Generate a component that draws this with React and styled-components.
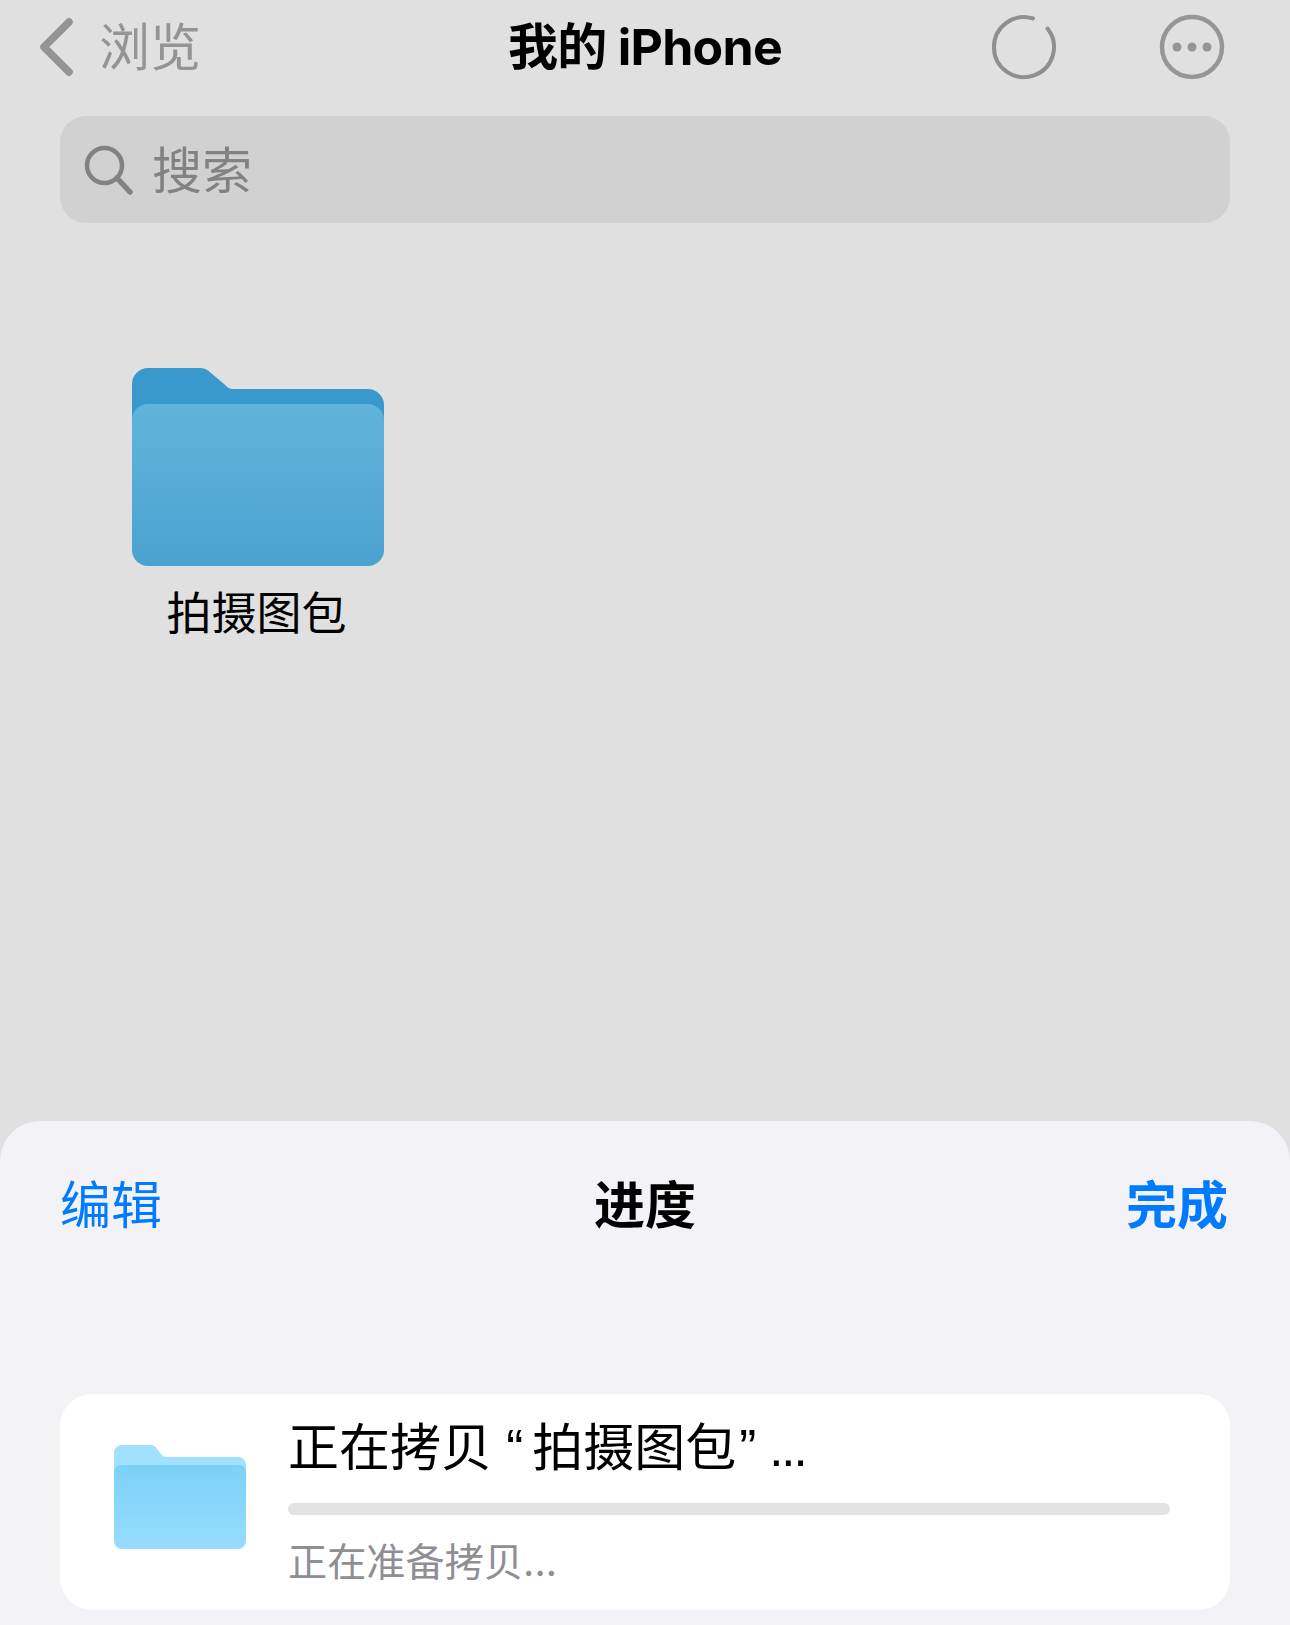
import React from 'react'
import styled, { createGlobalStyle } from 'styled-components'

const GlobalStyle = createGlobalStyle`
  html, body {
    margin: 0;
    padding: 0;
    background: #e0e0e0;
  }
  body {
    font-family: Inter, "Noto Sans CJK SC", sans-serif;
  }
`

const Page = styled.div`
  width: 1290px;
  height: 1625px;
  display: flex;
  flex-direction: column;
  overflow: hidden;
  background: #e0e0e0;
`

const TopBar = styled.header`
  height: 94px;
  display: grid;
  grid-template-columns: 1fr auto 1fr;
  align-items: center;
  padding: 0 40px;
`

const BackButton = styled.div`
  display: flex;
  align-items: center;
  gap: 25px;
  font-size: 51px;
  color: #949494;
`

const BackLabel = styled.span`
  padding-bottom: 7px;
`

const Title = styled.div`
  font-size: 50px;
  font-weight: 700;
  color: #000;
  letter-spacing: -0.7px;
  padding-bottom: 8px;
`

const TopActions = styled.div`
  display: flex;
  justify-content: flex-end;
  align-items: center;
  gap: 102px;
  padding-right: 25px;
`

const SearchBar = styled.div`
  height: 107px;
  margin: 22px 60px 0;
  padding-left: 24px;
  display: flex;
  align-items: center;
  gap: 18px;
  border-radius: 26px;
  background: #d1d1d1;
  font-size: 50px;
  color: #828282;
`

const SearchLabel = styled.span`
  padding-bottom: 5px;
`

const FolderGrid = styled.div`
  display: flex;
  padding: 145px 0 0 132px;
`

const FolderItem = styled.div`
  width: 252px;
  display: flex;
  flex-direction: column;
  align-items: center;
  gap: 18px;
`

const FolderName = styled.div`
  font-size: 45px;
  line-height: 60px;
  color: #000;
  padding-right: 3px;
`

const Sheet = styled.section`
  margin-top: auto;
  height: 504px;
  box-sizing: border-box;
  padding: 0 60px;
  border-radius: 40px 40px 0 0;
  background: #f2f2f7;
`

const SheetNav = styled.div`
  height: 168px;
  display: grid;
  grid-template-columns: 1fr auto 1fr;
  align-items: center;
  font-size: 51px;
  padding-bottom: 6px;
  box-sizing: border-box;
`

const NavLink = styled.div`
  color: #007aff;
  font-weight: ${(p) => (p.$bold ? 600 : 400)};
  text-align: ${(p) => (p.$right ? 'right' : 'left')};
  padding-right: ${(p) => (p.$right ? '2px' : '0')};
`

const SheetTitle = styled.div`
  font-weight: 700;
  color: #000;
`

const ProgressCard = styled.div`
  margin-top: 105px;
  height: 216px;
  box-sizing: border-box;
  padding: 0 60px 0 54px;
  display: flex;
  align-items: center;
  gap: 42px;
  border-radius: 32px;
  background: #fff;
`

const FolderSlot = styled.div`
  display: flex;
  margin-bottom: 10px;
`

const ProgressBody = styled.div`
  flex: 1;
  align-self: flex-start;
  display: flex;
  flex-direction: column;
  padding-top: 20px;
`

const ProgressTitle = styled.div`
  font-family: "Liberation Sans", "Noto Sans CJK SC", sans-serif;
  font-size: 51px;
  line-height: 70px;
  color: #000;
  white-space: pre;
`

const Quote = styled.span`
  margin-left: ${(p) => p.$before};
  margin-right: ${(p) => p.$after};
`

const Dots = styled.span`
  letter-spacing: -2px;
`

const ProgressTrack = styled.div`
  height: 12px;
  margin-top: 19px;
  border-radius: 6px;
  background: #e3e3e5;
`

const ProgressStatus = styled.div`
  margin-top: 20px;
  font-size: 39.2px;
  line-height: 54px;
  color: #8e8e93;
`

const BackChevron = () => (
  <svg width="34" height="58" viewBox="0 0 34 58" fill="none">
    <path d="M29 4 L4 29 L29 54" stroke="#949494" strokeWidth="7.5" strokeLinecap="round" strokeLinejoin="round" />
  </svg>
)

const Spinner = () => (
  <svg width="66" height="66" viewBox="0 0 66 66" fill="none">
    <path d="M42 4.5 A30 30 0 1 0 56.5 14.5" stroke="#8f8f8f" strokeWidth="4" strokeLinecap="round" />
  </svg>
)

const MoreButton = () => (
  <svg width="66" height="66" viewBox="0 0 66 66" fill="none">
    <circle cx="33" cy="33" r="30" stroke="#969696" strokeWidth="4.5" />
    <circle cx="18" cy="33" r="4.5" fill="#969696" />
    <circle cx="33" cy="33" r="4.5" fill="#969696" />
    <circle cx="48" cy="33" r="4.5" fill="#969696" />
  </svg>
)

const SearchIcon = () => (
  <svg width="50" height="50" viewBox="0 0 50 50" fill="none">
    <circle cx="20.5" cy="20.5" r="17.5" stroke="#828282" strokeWidth="4.5" />
    <path d="M33 33 L46 47" stroke="#828282" strokeWidth="5.5" strokeLinecap="round" />
  </svg>
)

const LargeFolder = () => (
  <svg width="252" height="198" viewBox="0 0 252 198">
    <defs>
      <linearGradient id="largeFront" x1="0" y1="0" x2="0" y2="1">
        <stop offset="0" stopColor="#60b3da" />
        <stop offset="0.35" stopColor="#5aaed8" />
        <stop offset="1" stopColor="#4aa2cf" />
      </linearGradient>
    </defs>
    <path
      d="M0 16 A16 16 0 0 1 16 0 H66 C72 0 75 1 79 5 L92 16 C95 19 97 21 102 21 H236 A16 16 0 0 1 252 37 V120 H0 Z"
      fill="#3a99cc"
    />
    <path
      d="M0 52 A16 16 0 0 1 16 36 H236 A16 16 0 0 1 252 52 V182 A16 16 0 0 1 236 198 H16 A16 16 0 0 1 0 182 Z"
      fill="url(#largeFront)"
    />
  </svg>
)

const SmallFolder = () => (
  <svg width="132" height="104" viewBox="0 0 132 104">
    <defs>
      <linearGradient id="smallFront" x1="0" y1="0" x2="0" y2="1">
        <stop offset="0" stopColor="#7bd1f8" />
        <stop offset="1" stopColor="#97dcfd" />
      </linearGradient>
    </defs>
    <path
      d="M0 8 A8 8 0 0 1 8 0 H36 C40 0 41 1 43 4 L48 10 C50 12 52 12 55 12 H124 A8 8 0 0 1 132 20 V60 H0 Z"
      fill="#a0e1ff"
    />
    <path
      d="M0 26 A8 8 0 0 1 8 20 H124 A8 8 0 0 1 132 26 V96 A8 8 0 0 1 124 104 H8 A8 8 0 0 1 0 96 Z"
      fill="url(#smallFront)"
    />
  </svg>
)

const App = () => {
  return (
    <Page>
      <GlobalStyle />
      <TopBar>
        <BackButton>
          <BackChevron />
          <BackLabel>浏览</BackLabel>
        </BackButton>
        <Title>我的 iPhone</Title>
        <TopActions>
          <Spinner />
          <MoreButton />
        </TopActions>
      </TopBar>
      <SearchBar>
        <SearchIcon />
        <SearchLabel>搜索</SearchLabel>
      </SearchBar>
      <FolderGrid>
        <FolderItem>
          <LargeFolder />
          <FolderName>拍摄图包</FolderName>
        </FolderItem>
      </FolderGrid>
      <Sheet>
        <SheetNav>
          <NavLink>编辑</NavLink>
          <SheetTitle>进度</SheetTitle>
          <NavLink $right $bold>完成</NavLink>
        </SheetNav>
        <ProgressCard>
          <FolderSlot>
            <SmallFolder />
          </FolderSlot>
          <ProgressBody>
            <ProgressTitle>
              正在拷贝 <Quote $before="0" $after="9px">“</Quote>拍摄图包<Quote $before="3px" $after="13px">”</Quote><Dots>...</Dots>
            </ProgressTitle>
            <ProgressTrack />
            <ProgressStatus>正在准备拷贝...</ProgressStatus>
          </ProgressBody>
        </ProgressCard>
      </Sheet>
    </Page>
  )
}

export default App
